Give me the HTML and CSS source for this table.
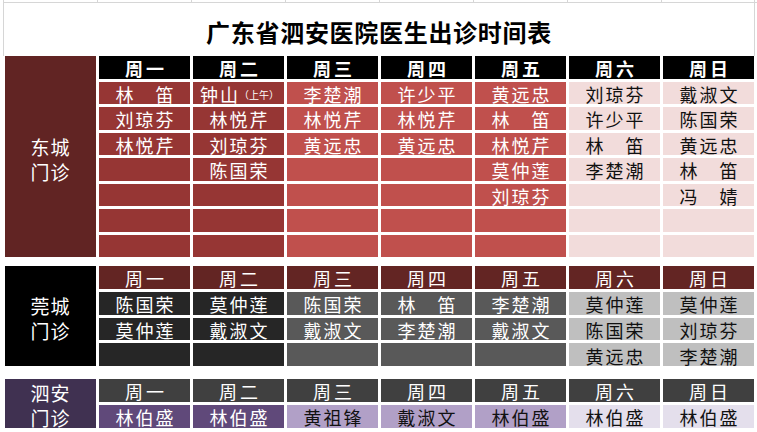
FILE: index.html
```html
<!DOCTYPE html>
<html lang="zh-CN">
<head>
<meta charset="utf-8">
<title>广东省泗安医院医生出诊时间表</title>
<link rel="stylesheet" href="styles.css">
</head>
<body>
<div class="sheet">
  <div class="topgrid"><i></i><i></i><i></i><i></i><i></i><i></i><i></i><i></i></div>
  <h1 class="title">广东省泗安医院医生出诊时间表</h1>

  <section class="block s1">
    <div class="place">东城<br>门诊</div>
    <div class="hd">周一</div><div class="hd">周二</div><div class="hd">周三</div><div class="hd">周四</div><div class="hd">周五</div><div class="hd">周六</div><div class="hd">周日</div>

    <div class="c m"><span class="spread">林笛</span></div><div class="c m">钟山<span class="note">（上午）</span></div><div class="c w">李楚潮</div><div class="c w">许少平</div><div class="c w">黄远忠</div><div class="c s">刘琼芬</div><div class="c s">戴淑文</div>
    <div class="c m">刘琼芬</div><div class="c m">林悦芹</div><div class="c w">林悦芹</div><div class="c w">林悦芹</div><div class="c w"><span class="spread">林笛</span></div><div class="c s">许少平</div><div class="c s">陈国荣</div>
    <div class="c m">林悦芹</div><div class="c m">刘琼芬</div><div class="c w">黄远忠</div><div class="c w">黄远忠</div><div class="c w">林悦芹</div><div class="c s"><span class="spread">林笛</span></div><div class="c s">黄远忠</div>
    <div class="c m"></div><div class="c m">陈国荣</div><div class="c w"></div><div class="c w"></div><div class="c w">莫仲莲</div><div class="c s">李楚潮</div><div class="c s"><span class="spread">林笛</span></div>
    <div class="c m"></div><div class="c m"></div><div class="c w"></div><div class="c w"></div><div class="c w">刘琼芬</div><div class="c s"></div><div class="c s"><span class="spread">冯婧</span></div>
    <div class="c m"></div><div class="c m"></div><div class="c w"></div><div class="c w"></div><div class="c w"></div><div class="c s"></div><div class="c s"></div>
    <div class="c m"></div><div class="c m"></div><div class="c w"></div><div class="c w"></div><div class="c w"></div><div class="c s"></div><div class="c s"></div>
  </section>

  <section class="block s2">
    <div class="place">莞城<br>门诊</div>
    <div class="hd">周一</div><div class="hd">周二</div><div class="hd">周三</div><div class="hd">周四</div><div class="hd">周五</div><div class="hd">周六</div><div class="hd">周日</div>

    <div class="c m">陈国荣</div><div class="c m">莫仲莲</div><div class="c w">陈国荣</div><div class="c w"><span class="spread">林笛</span></div><div class="c w">李楚潮</div><div class="c s">莫仲莲</div><div class="c s">莫仲莲</div>
    <div class="c m">莫仲莲</div><div class="c m">戴淑文</div><div class="c w">戴淑文</div><div class="c w">李楚潮</div><div class="c w">戴淑文</div><div class="c s">陈国荣</div><div class="c s">刘琼芬</div>
    <div class="c m"></div><div class="c m"></div><div class="c w"></div><div class="c w"></div><div class="c w"></div><div class="c s">黄远忠</div><div class="c s">李楚潮</div>
  </section>

  <section class="block s3">
    <div class="place">泗安<br>门诊</div>
    <div class="hd">周一</div><div class="hd">周二</div><div class="hd">周三</div><div class="hd">周四</div><div class="hd">周五</div><div class="hd">周六</div><div class="hd">周日</div>

    <div class="c m">林伯盛</div><div class="c m">林伯盛</div><div class="c w">黄祖锋</div><div class="c w">戴淑文</div><div class="c w">林伯盛</div><div class="c s">林伯盛</div><div class="c s">林伯盛</div>
  </section>
</div>
</body>
</html>
```

FILE: styles.css
```css
* {
  box-sizing: border-box;
}

body {
  margin: 0;
  background: #ffffff;
  font-family: "Noto Sans CJK SC", "Noto Sans", sans-serif;
}

.sheet {
  width: 757px;
  height: 432px;
  overflow: hidden;
}

/* spreadsheet gridlines above the title */
.topgrid {
  display: grid;
  grid-template-columns: repeat(8, 94px);
  margin-left: 3px;
  height: 3px;
  border-bottom: 1px solid #d6d6d6;
}

.topgrid i {
  border-left: 1px solid #d6d6d6;
}

.topgrid i:last-child {
  border-right: 1px solid #d6d6d6;
}

.title {
  margin: 0 2px 0 3px;
  height: 53px;
  border-left: 1px solid #d6d6d6;
  border-right: 1px solid #d6d6d6;
  display: flex;
  align-items: center;
  justify-content: center;
  padding-top: 4px;
  font-size: 24px;
  font-weight: bold;
  letter-spacing: 0.7px;
  line-height: 1;
  color: #000000;
}

.block {
  display: grid;
  grid-template-columns: repeat(8, 91px);
  gap: 3px;
  margin-left: 5px;
}

.s1 {
  grid-template-rows: repeat(8, 22.5px);
}

.s2 {
  margin-top: 9px;
  grid-template-rows: repeat(4, 22.75px);
}

.s3 {
  margin-top: 13px;
  grid-template-rows: repeat(2, 22.75px);
}

.place {
  grid-row: 1 / -1;
  grid-column: 1;
  display: flex;
  align-items: center;
  justify-content: center;
  text-align: center;
  color: #ffffff;
  font-size: 19px;
  line-height: 25px;
  letter-spacing: 1px;
  padding-top: 4px;
}

.hd,
.c {
  display: flex;
  align-items: center;
  justify-content: center;
  font-size: 18px;
  line-height: 1;
  white-space: nowrap;
  padding-top: 2px;
  padding-left: 2px;
}

.hd {
  letter-spacing: 3px;
  padding-left: 3px;
  color: #ffffff;
}

.c {
  letter-spacing: 2px;
}

.spread {
  display: inline-block;
  width: 58px;
  text-align: justify;
  text-align-last: justify;
  letter-spacing: 0;
  margin-right: 2px;
}

.note {
  font-size: 10px;
  letter-spacing: 0;
  margin-left: -1px;
  padding-top: 3px;
}

/* 东城门诊 */
.s1 .place { background: #612423; }
.s1 .hd { background: #000000; font-weight: bold; }
.s1 .m { background: #963634; color: #ffffff; }
.s1 .w { background: #c0504d; color: #ffffff; }
.s1 .s { background: #f2dcdb; color: #111111; }

/* 莞城门诊 */
.s2 .place { background: #000000; }
.s2 .hd { background: #632523; }
.s2 .m { background: #262626; color: #ffffff; }
.s2 .w { background: #595959; color: #ffffff; }
.s2 .s { background: #bfbfbf; color: #111111; }

/* 泗安门诊 */
.s3 .place { background: #403151; }
.s3 .hd { background: #404040; }
.s3 .m { background: #60497a; color: #ffffff; }
.s3 .w { background: #b1a0c7; color: #111111; }
.s3 .s { background: #e4dfec; color: #111111; }
```
